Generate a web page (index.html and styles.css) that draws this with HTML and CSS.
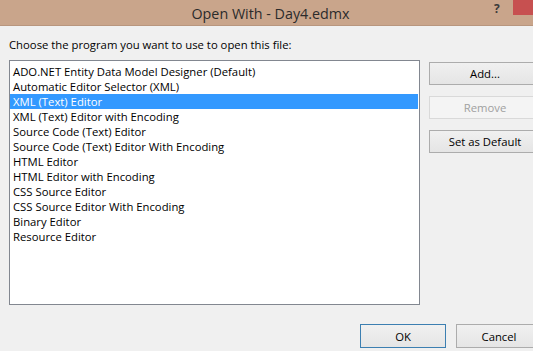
FILE: index.html
```html
<!DOCTYPE html>
<html lang="en">
  <head>
    <meta charset="UTF-8" />
    <title>Open With</title>
    <link rel="stylesheet" href="styles.css">
  </head>
  <body>
    <div class="dialog">
      <div class="titlebar">
        <div class="title">Open With - Day4.edmx</div>
        <div class="help-button">?</div>
        <div class="close-button"></div>
      </div>
      <div class="content">
        <div class="prompt">Choose the program you want to use to open this file:</div>
        <div class="main-row">
          <ul class="program-list">
            <li>ADO.NET Entity Data Model Designer (Default)</li>
            <li>Automatic Editor Selector (XML)</li>
            <li class="selected">XML (Text) Editor</li>
            <li>XML (Text) Editor with Encoding</li>
            <li>Source Code (Text) Editor</li>
            <li>Source Code (Text) Editor With Encoding</li>
            <li>HTML Editor</li>
            <li>HTML Editor with Encoding</li>
            <li>CSS Source Editor</li>
            <li>CSS Source Editor With Encoding</li>
            <li>Binary Editor</li>
            <li>Resource Editor</li>
          </ul>
          <div class="side-buttons">
            <button class="dialog-btn side-btn">Add...</button>
            <button class="dialog-btn side-btn" disabled>Remove</button>
            <button class="dialog-btn side-btn">Set as Default</button>
          </div>
        </div>
        <div class="footer">
          <button class="dialog-btn footer-btn default-btn">OK</button>
          <button class="dialog-btn footer-btn">Cancel</button>
        </div>
      </div>
    </div>
  </body>
</html>
```

FILE: styles.css
```css
body {
  margin: 0;
  background-color: #f0f0f0;
  font-family: "Open Sans", "Noto Sans", sans-serif;
  overflow: hidden;
}
.dialog {
  width: 551px;
  background-color: #f0f0f0;
}
.titlebar {
  position: relative;
  height: 25px;
  background-color: #c9a58b;
  border-bottom: 1px solid #b8967e;
  display: flex;
  justify-content: center;
  align-items: center;
}
.title {
  font-size: 14.3px;
  color: #2b2b2b;
  margin-right: 10px;
  margin-top: 2px;
}
.help-button {
  position: absolute;
  left: 494px;
  top: 0;
  font-size: 12px;
  font-weight: bold;
  color: #3a3a3a;
}
.close-button {
  position: absolute;
  left: 513px;
  top: 0;
  width: 38px;
  height: 15px;
  background-color: #c75050;
}
.content {
  padding: 11px 9px 0 9px;
}
.prompt {
  font-size: 11.3px;
  line-height: 15px;
  color: #000;
}
.main-row {
  display: flex;
  gap: 9px;
  margin-top: 8px;
  align-items: flex-start;
}
.program-list {
  list-style: none;
  margin: 0;
  padding: 3px 0 0 0;
  width: 409px;
  height: 240px;
  background-color: #fff;
  border: 1px solid #828790;
}
.program-list li {
  height: 15px;
  line-height: 15px;
  font-size: 11.3px;
  padding-left: 3px;
  margin-right: 1px;
  color: #000;
  white-space: nowrap;
}
.program-list li.selected {
  background-color: #3399ff;
  color: #fff;
}
.side-buttons {
  display: flex;
  flex-direction: column;
  gap: 11px;
  padding-top: 2px;
}
.dialog-btn {
  font-family: "Open Sans", "Noto Sans", sans-serif;
  font-size: 11.3px;
  color: #000;
  background: linear-gradient(#f0f0f0, #e5e5e5);
  border: 1px solid #acacac;
  border-radius: 0;
  padding: 0;
}
.side-btn {
  width: 112px;
  height: 23px;
}
.side-btn:disabled {
  background: #f4f4f4;
  border-color: #d9d9d9;
  color: #a0a0a0;
}
.footer {
  display: flex;
  justify-content: flex-end;
  gap: 10px;
  margin-top: 19px;
}
.footer-btn {
  width: 86px;
  height: 24px;
}
.default-btn {
  border-color: #3c7fb1;
}
```
